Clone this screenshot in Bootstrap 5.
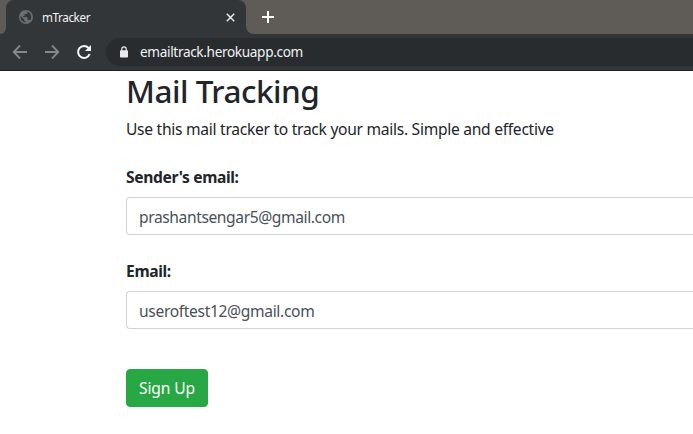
<!DOCTYPE html>
<html lang="en">
<head>
<meta charset="utf-8">
<meta name="viewport" content="width=device-width, initial-scale=1">
<title>mTracker</title>
<link href="https://cdn.jsdelivr.net/npm/bootstrap@5.3.0/dist/css/bootstrap.min.css" rel="stylesheet">
<style>
body{font-family:"Segoe UI","Noto Sans","Open Sans",sans-serif;font-size:15.6px;color:#212529;background:#fff;overflow:hidden}
svg{display:block;flex:none}
.tabstrip{height:34px;background:#5f5b57}
.tab-gap{width:6px;background:#323639}
.tab-gap::before{content:"";display:block;height:34px;background:#5f5b57;border-bottom-right-radius:7px}
.tab{width:240px;height:34px;background:#323639;border-radius:8px 8px 0 0;padding:0 11px 0 13px}
.tab-rest{background:#323639}
.tab-rest-fill{height:34px;background:#5f5b57;border-bottom-left-radius:8px;padding-left:16px}
.tab-title{font-size:11.7px;color:#f1f3f4;line-height:16px;margin-left:9px;letter-spacing:-.4px}
.toolbar{height:37px;background:#323639;border-bottom:1px solid #211f20;padding-left:12px}
.omnibox{height:28px;background:#282c2f;border-radius:14px 0 0 14px;margin-left:14px;padding-left:13px}
.url{font-size:13.6px;line-height:20px;color:#f1f3f4;margin-left:11px;letter-spacing:-.34px}
.page{padding-left:126px}
h1.title{font-size:31.5px;line-height:38px;font-weight:500;margin:1px 0 7px;letter-spacing:-.5px}
.intro{line-height:24px;margin-bottom:24px;letter-spacing:-.28px}
.form-label{line-height:24px;font-weight:700;margin-bottom:8px;letter-spacing:-.35px}
.form-control,.form-control:focus{height:38px;font-size:15.6px;border-color:#ced4da;border-right:0;border-radius:4px 0 0 4px;color:#495057;padding:7px 12px 5px;letter-spacing:-.4px}
#email{letter-spacing:-.34px}
.field-gap{margin-bottom:24px}
.btn-signup,.btn-signup:hover{width:82px;height:38px;background:#28a745;border-color:#28a745;color:#fff;border-radius:4px;margin-top:16px;padding:7px 0 5px;font-size:15.6px;letter-spacing:-.1px}
</style>
<script src="https://cdn.jsdelivr.net/npm/bootstrap@5.3.0/dist/js/bootstrap.bundle.min.js"></script>
</head>
<body>
<header>
  <div class="tabstrip d-flex">
    <div class="tab-gap"></div>
    <div class="tab d-flex align-items-center">
      <svg width="14" height="14" viewBox="0 0 14 14"><circle cx="7" cy="7" r="7" fill="#6b6f73"/><path d="M8.500 1.600v1.200c0 .8-.6 1.300-1.400 1.300H5.600v1.300c0 .4-.3.7-.7.7H4v.9h3.600c.5 0 .9.3.9.8v1.900h1c.6 0 1.100.3 1.300.9A5.600 5.600 0 0 0 8.500 1.600zM1.500 6a5.600 5.600 0 0 0 5 6.500v-1.400c-.9 0-1.500-.6-1.500-1.400V9.200z" fill="#323639"/></svg>
      <span class="tab-title">mTracker</span>
      <svg class="ms-auto" width="9" height="9" viewBox="0 0 9 9"><path d="M.8.8l7.400 7.400M8.200.8L.8 8.200" stroke="#e8eaed" stroke-width="1.500"/></svg>
    </div>
    <div class="tab-rest flex-grow-1"><div class="tab-rest-fill d-flex align-items-center">
      <svg width="12" height="12" viewBox="0 0 12 12"><path d="M6 0v12M0 6h12" stroke="#fff" stroke-width="2"/></svg>
    </div></div>
  </div>
  <div class="toolbar d-flex align-items-center">
    <svg width="16" height="16" viewBox="0 0 16 16"><path d="M15 8H2M8 1.500L1.700 8 8 14.500" fill="none" stroke="#85898c" stroke-width="1.800"/></svg>
    <svg class="ms-3" width="16" height="16" viewBox="0 0 16 16"><path d="M1 8h13M8 1.500L14.300 8 8 14.500" fill="none" stroke="#85898c" stroke-width="1.800"/></svg>
    <svg class="ms-3" width="16" height="16" viewBox="0 0 16 16"><path d="M13.700 10A6 6 0 1 1 12.600 4" fill="none" stroke="#f4f5f6" stroke-width="2"/><path d="M15 1v6H9z" fill="#f4f5f6"/></svg>
    <div class="omnibox flex-grow-1 d-flex align-items-center">
      <svg width="10" height="12" viewBox="0 0 10 12"><rect x="1" y="4.300" width="8" height="7.200" rx=".8" fill="#e8eaed"/><path d="M2.800 5V3a2.200 2.200 0 0 1 4.400 0v2" fill="none" stroke="#e8eaed" stroke-width="1.200"/></svg>
      <span class="url">emailtrack.herokuapp.com</span>
    </div>
  </div>
</header>
<main class="page">
  <h1 class="title"><span>Mail Tracking</span></h1>
  <p class="intro"><span>Use this mail tracker to track your mails. Simple and effective</span></p>
  <form>
    <div class="field-gap">
      <label class="form-label d-block" for="sender"><span>Sender's email:</span></label>
      <input class="form-control" id="sender" type="text" value="prashantsengar5@gmail.com">
    </div>
    <div class="field-gap">
      <label class="form-label d-block" for="email"><span>Email:</span></label>
      <input class="form-control" id="email" type="text" value="useroftest12@gmail.com">
    </div>
    <button type="button" class="btn btn-signup">Sign Up</button>
  </form>
</main>
</body>
</html>
